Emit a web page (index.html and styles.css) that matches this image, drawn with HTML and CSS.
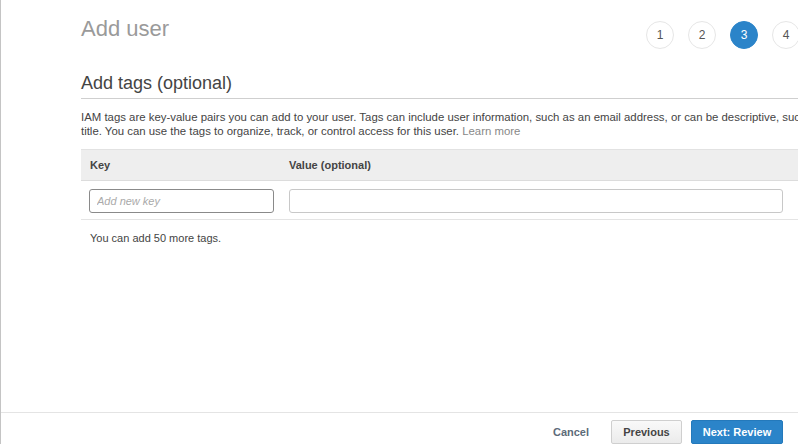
FILE: index.html
```html
<!DOCTYPE html>
<html>
<head>
<meta charset="utf-8">
<link rel="stylesheet" href="styles.css">
</head>
<body>
<div class="page">
  <div class="main">
    <div class="header">
      <h1 class="title">Add user</h1>
      <div class="steps">
        <span class="step">1</span>
        <span class="step">2</span>
        <span class="step active">3</span>
        <span class="step">4</span>
      </div>
    </div>
    <h2 class="section">Add tags (optional)</h2>
    <p class="desc">IAM tags are key-value pairs you can add to your user. Tags can include user information, such as an email address, or can be descriptive, such as a job title. You can use the tags to organize, track, or control access for this user. <a class="link">Learn more</a></p>
    <div class="table">
      <div class="thead">
        <div class="col-key">Key</div>
        <div class="col-val">Value (optional)</div>
      </div>
      <div class="trow">
        <div class="col-key"><input class="inp inp-key" placeholder="Add new key"></div>
        <div class="col-val"><input class="inp inp-val"></div>
      </div>
    </div>
    <p class="note">You can add 50 more tags.</p>
  </div>
  <div class="footer">
    <button class="btn-cancel">Cancel</button>
    <button class="btn btn-prev">Previous</button>
    <button class="btn btn-next">Next: Review</button>
  </div>
</div>
</body>
</html>
```

FILE: styles.css
```css
* { box-sizing: border-box; }
html, body { margin: 0; padding: 0; }
body {
  width: 798px;
  height: 444px;
  overflow: hidden;
  background: #fff;
  font-family: "Liberation Sans", Arial, sans-serif;
  color: #444;
}
.page {
  height: 444px;
  display: flex;
  flex-direction: column;
  border-left: 1px solid #c4c4c4;
}
.main {
  padding-left: 80px;
  width: 840px;
}
.header {
  display: flex;
  justify-content: space-between;
  align-items: flex-start;
  height: 71px;
}
.title {
  margin: 0;
  padding-top: 16px;
  font-size: 22px;
  line-height: 26px;
  font-weight: normal;
  color: #9a9a9a;
}
.steps {
  display: flex;
  gap: 14px;
  margin-top: 21px;
  margin-right: 41px;
}
.step {
  width: 28px;
  height: 28px;
  border-radius: 50%;
  border: 1px solid #e6e6e6;
  display: flex;
  align-items: center;
  justify-content: center;
  font-size: 12px;
  color: #555;
  background: #fff;
}
.step.active {
  background: #2b84c9;
  border-color: #2b84c9;
  color: #fff;
}
.section {
  margin: 0;
  font-size: 18px;
  line-height: 24px;
  font-weight: normal;
  color: #444;
  padding-bottom: 3px;
  border-bottom: 1px solid #cfcfcf;
}
.desc {
  margin: 11px 0 0;
  font-size: 11.4px;
  line-height: 14px;
  color: #444;
  width: 778px;
}
.link { color: #888; }
.table {
  margin-top: 11px;
  width: 760px;
}
.thead {
  display: flex;
  height: 32px;
  align-items: center;
  background: #eeeeee;
  border-top: 1px solid #e2e2e2;
  border-bottom: 1px solid #dcdcdc;
  font-size: 11px;
  font-weight: bold;
  color: #444;
}
.thead .col-key { padding-left: 9px; }
.col-key { width: 208px; }
.col-val { flex: 1; }
.trow {
  display: flex;
  padding: 8px 0 6px;
  border-bottom: 1px solid #e4e4e4;
}
.trow .col-key { padding-left: 8px; }
.inp {
  display: block;
  height: 24px;
  border: 1px solid #c8c8c8;
  border-radius: 3px;
  font-family: "Liberation Sans", Arial, sans-serif;
  font-size: 11px;
  padding: 0 7px;
  color: #444;
  outline: none;
}
.inp-key {
  width: 185px;
  border-color: #8a8a8a;
}
.inp-key::placeholder { color: #aaa; font-style: italic; }
.inp-val { width: 494px; }
.note {
  margin: 11px 0 0 9px;
  font-size: 11px;
  line-height: 14px;
  color: #444;
}
.footer {
  margin-top: auto;
  height: 32px;
  border-top: 1px solid #e4e4e4;
  display: flex;
  align-items: flex-start;
  padding-top: 7px;
  padding-left: 550px;
}
.footer button {
  font-family: "Liberation Sans", Arial, sans-serif;
  font-size: 11px;
  font-weight: bold;
  cursor: pointer;
}
.btn-cancel {
  background: none;
  border: none;
  color: #5d6b79;
  padding: 0;
  height: 24px;
  width: 40px;
  margin-right: 20px;
}
.btn {
  height: 24px;
  border-radius: 2px;
  padding: 0;
}
.btn-prev {
  width: 71px;
  background: linear-gradient(#f9f9f9, #ebebeb);
  border: 1px solid #cfcfcf;
  color: #444;
  margin-right: 9px;
}
.btn-next {
  width: 92px;
  background: #2b84c9;
  border: 1px solid #2479bb;
  color: #fff;
}
```
